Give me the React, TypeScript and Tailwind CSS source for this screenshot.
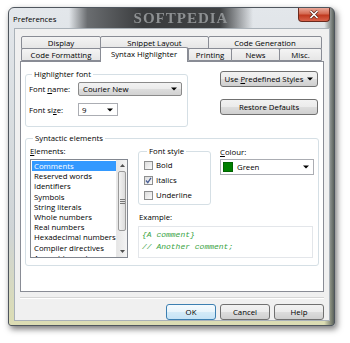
import React from 'react';

const ui = "font-['Open_Sans','Liberation_Sans',sans-serif]";

const Arrow = ({ color = '#000' }: { color?: string }) => (
  <svg width="6" height="4" viewBox="0 0 6 4">
    <path d="M0 0.5 H6 L3 3.5 Z" fill={color} />
  </svg>
);

const Tab = ({ label, w, selected }: { label: string; w: string; selected?: boolean }) => {
  if (selected) {
    return (
      <div className={`${w} h-[15px] -ml-px relative z-10 flex items-start justify-center pt-[1px] border-x border-t border-[#898c95] rounded-t-[2px] bg-white`}>
        {label}
      </div>
    );
  }
  return (
    <div className={`${w} h-[13px] -ml-px first:ml-0 flex items-center justify-center border border-[#898c95] rounded-t-[2px] bg-[linear-gradient(#f4f4f4,#e6e6e6)]`}>
      {label}
    </div>
  );
};

const Button = ({ children, w, primary }: { children: React.ReactNode; w: string; primary?: boolean }) => (
  <div
    className={`${w} h-[16px] flex items-center justify-center rounded-[3px] border ${
      primary
        ? 'border-[#3c7fb1] bg-[linear-gradient(#f4fafe,#e8f4fb_50%,#d4ebf8_50%,#c6e3f5)]'
        : 'border-[#707070] bg-[linear-gradient(#f2f2f2,#ebebeb_50%,#dddddd_50%,#cfcfcf)]'
    }`}
  >
    {children}
  </div>
);

const Check = ({ label, checked }: { label: string; checked?: boolean }) => (
  <div className="h-[10px] flex items-center gap-[3px]">
    <div className="w-[9px] h-[9px] border border-[#8e8f8f] bg-[linear-gradient(135deg,#dcdcdc,#fbfbfb)] flex items-center justify-center">
      {checked && (
        <svg width="7" height="7" viewBox="0 0 7 7">
          <path d="M1 3.5 L2.8 5.6 L6 0.8" stroke="#4a5f97" strokeWidth="1.3" fill="none" />
        </svg>
      )}
    </div>
    <span>{label}</span>
  </div>
);

const elements = [
  'Comments',
  'Reserved words',
  'Identifiers',
  'Symbols',
  'String literals',
  'Whole numbers',
  'Real numbers',
  'Hexadecimal numbers',
  'Compiler directives',
  'Assembler code',
];

export default function App() {
  return (
    <div className={`w-[350px] h-[343px] bg-white overflow-hidden text-[7.8px] leading-[10px] text-black ${ui}`}>
      <div className="ml-[8px] mt-[7px] w-[327px] h-[319px] flex flex-col rounded-t-[6px] rounded-b-[3px] border border-[#4f565e] shadow-[2px_3px_6px_rgba(0,0,0,0.55)] bg-[linear-gradient(to_right,transparent_97%,#5b625c),linear-gradient(#e3e7eb,#cfd4d6_70%,#dcddb3)]">
        {/* title bar */}
        <div className="h-[20px] flex items-start">
          <div className="pl-[4px] pt-[6px] w-[60px]">Preferences</div>
          <div className="h-[20px] w-[184px] flex items-center justify-center bg-[linear-gradient(to_right,transparent,#6a6d70_10%,#3a3c3e_40%,#3e4042_82%,transparent)]">
            <span className="ml-[40px] font-['Liberation_Serif',serif] font-bold text-[15px] tracking-[1px] text-[#8d9092] blur-[0.6px]">SOFTPEDIA</span>
          </div>
          <div className="flex-1" />
          <div className="mr-[4px] w-[32px] h-[14px] rounded-b-[4px] border border-t-0 border-[#6b2a1e] bg-[linear-gradient(#eaa899,#d46a52_45%,#c0391f_55%,#d8624a)] flex items-center justify-center">
            <svg width="10" height="9" viewBox="0 0 10 9">
              <path d="M1.5 1 L8.5 8 M8.5 1 L1.5 8" stroke="#5a2418" strokeWidth="3" />
              <path d="M1.5 1 L8.5 8 M8.5 1 L1.5 8" stroke="#fff" strokeWidth="1.6" />
            </svg>
          </div>
        </div>

        {/* client area */}
        <div className="ml-[5px] mr-[4px] mb-[5px] flex-1 flex flex-col bg-[#f0f0f0] border border-[#a9b1b8]">
          {/* tabs */}
          <div className="ml-[6px] mt-[7px] w-[301px] relative z-10 -mb-px">
            <div className="flex h-[13px]">
              <Tab label="Display" w="w-[80px]" />
              <Tab label="Snippet Layout" w="w-[109px]" />
              <Tab label="Code Generation" w="w-[114px]" />
            </div>
            <div className="flex items-end h-[14px] -mt-px">
              <div className="flex items-end mb-px">
                <Tab label="Code Formatting" w="w-[80px]" />
              </div>
              <Tab label="Syntax Highlighter" w="w-[90px]" selected />
              <div className="flex items-end mb-px">
                <Tab label="Printing" w="w-[44px]" />
                <Tab label="News" w="w-[49px]" />
                <Tab label="Misc." w="w-[43px]" />
              </div>
            </div>
          </div>

          {/* panel */}
          <div className="ml-[5px] w-[304px] h-[231px] border border-[#898c95] bg-white">
            <div className="flex">
              <fieldset className="ml-[4px] mt-[7px] w-[163px] h-[58px] border border-[#d5dfe5] rounded-[3px] px-[3px]">
                <legend className="ml-[3px] px-[2px]">Highlighter font</legend>
                <div className="mt-[3px] flex items-center">
                  <span className="w-[49px]">
                    Font <span className="underline">n</span>ame:
                  </span>
                  <div className="w-[104px] h-[14px] flex items-center justify-between pl-[4px] pr-[4px] rounded-[2px] border border-[#8a8a8a] bg-[linear-gradient(#f2f2f2,#ebebeb_50%,#dddddd_50%,#d2d2d2)]">
                    <span>Courier New</span>
                    <Arrow />
                  </div>
                </div>
                <div className="mt-[7px] flex items-center">
                  <span className="w-[49px]">
                    Font si<span className="underline">z</span>e:
                  </span>
                  <div className="w-[40px] h-[13px] flex items-center justify-between pl-[3px] pr-[4px] border border-[#abadb3] bg-white">
                    <span>9</span>
                    <Arrow />
                  </div>
                </div>
              </fieldset>
              <div className="ml-[32px] mt-[9px] flex flex-col gap-[12px]">
                <Button w="w-[98px]">
                  <span>
                    Use <span className="underline">P</span>redefined Styles
                  </span>
                  <span className="ml-[4px]">
                    <Arrow />
                  </span>
                </Button>
                <Button w="w-[98px]">Restore Defaults</Button>
              </div>
            </div>

            <fieldset className="ml-[4px] mt-[6px] w-[294px] h-[133px] border border-[#d5dfe5] rounded-[3px] pl-[4px]">
              <legend className="ml-[3px] px-[2px]">Syntactic elements</legend>
              <div className="flex">
                <div className="flex flex-col">
                  <div className="mt-[3px] h-[10px]">
                    <span className="underline">E</span>lements:
                  </div>
                  <div className="mt-[3px] w-[98px] h-[99px] border border-[#828790] flex overflow-hidden">
                    <div className="flex-1 pt-px pl-px overflow-hidden">
                      {elements.map((e, i) => (
                        <div
                          key={e}
                          className={`h-[10.2px] pl-[2px] whitespace-nowrap ${i === 0 ? 'bg-[#3399ff] text-white' : ''}`}
                        >
                          {e}
                        </div>
                      ))}
                    </div>
                    <div className="w-[11px] flex flex-col bg-[linear-gradient(to_right,#e6e6e6,#f4f4f4)] border-l border-[#e8e8e8]">
                      <div className="h-[11px] flex items-center justify-center">
                        <svg width="5" height="3" viewBox="0 0 5 3"><path d="M0 3 L2.5 0 L5 3 Z" fill="#505050" /></svg>
                      </div>
                      <div className="h-[60px] mx-px rounded-[2px] border border-[#9a9a9a] bg-[linear-gradient(to_right,#f3f3f3,#dcdcdc)] flex flex-col items-center justify-center gap-[1px]">
                        <div className="w-[5px] h-px bg-[#777]" />
                        <div className="w-[5px] h-px bg-[#777]" />
                        <div className="w-[5px] h-px bg-[#777]" />
                      </div>
                      <div className="flex-1" />
                      <div className="h-[11px] flex items-center justify-center">
                        <svg width="5" height="3" viewBox="0 0 5 3"><path d="M0 0 L2.5 3 L5 0 Z" fill="#505050" /></svg>
                      </div>
                    </div>
                  </div>
                </div>

                <div className="ml-[10px] flex flex-col">
                  <div className="flex">
                    <fieldset className="mt-[3px] w-[73px] h-[59px] border border-[#d5dfe5] rounded-[3px] pl-[5px]">
                      <legend className="ml-[3px] px-[2px]">Font style</legend>
                      <div className="mt-[4px] flex flex-col gap-[5px]">
                        <Check label="Bold" />
                        <Check label="Italics" checked />
                        <Check label="Underline" />
                      </div>
                    </fieldset>
                    <div className="ml-[9px] mt-[4px] flex flex-col">
                      <div className="h-[10px]">
                        <span className="underline">C</span>olour:
                      </div>
                      <div className="mt-[2px] w-[94px] h-[16px] border border-[#abadb3] bg-white flex items-center justify-between pl-[2px] pr-[4px]">
                        <div className="flex items-center gap-[4px]">
                          <div className="w-[10px] h-[10px] bg-[#008000] border border-[#006400]" />
                          <span>Green</span>
                        </div>
                        <Arrow />
                      </div>
                    </div>
                  </div>
                  <div className="mt-[7px] ml-px h-[10px]">Example:</div>
                  <div className="mt-[4px] w-[175px] h-[32px] border border-[#e3e6ea] bg-white pl-[3px] pt-[2px] font-['Liberation_Mono',monospace] italic text-[8px] leading-[12px] text-[#38a343]">
                    <div>{'{A comment}'}</div>
                    <div>// Another comment;</div>
                  </div>
                </div>
              </div>
            </fieldset>
          </div>

          {/* separator */}
          <div className="ml-[5px] mt-[5px] w-[304px] h-[2px] border-t border-[#d5d5d5] border-b border-b-white" />

          {/* buttons */}
          <div className="mt-[5px] mr-[5px] flex justify-end gap-[4px]">
            <Button w="w-[50px]" primary>OK</Button>
            <Button w="w-[50px]">Cancel</Button>
            <Button w="w-[50px]">Help</Button>
          </div>
        </div>
      </div>
    </div>
  );
}
